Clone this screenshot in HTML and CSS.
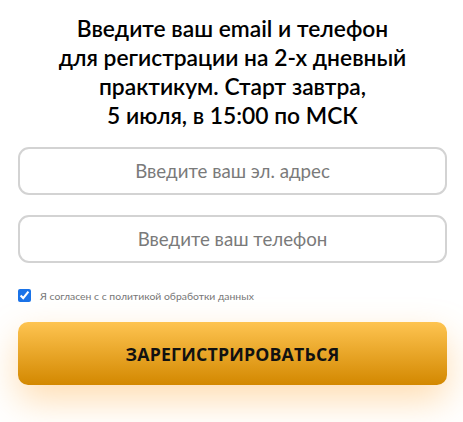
FILE: index.html
```html
<!DOCTYPE html>
<html lang="ru">
<head>
<meta charset="utf-8">
<link rel="stylesheet" href="styles.css">
</head>
<body>
<form class="form">
  <h2 class="title">Введите ваш email и телефон<br>для регистрации на 2-х дневный<br>практикум. Старт завтра,<br>5 июля, в 15:00 по МСК</h2>
  <input class="field" type="text" placeholder="Введите ваш эл. адрес">
  <input class="field" type="text" placeholder="Введите ваш телефон">
  <label class="agree"><input class="check" type="checkbox" checked><span>Я согласен с с политикой обработки данных</span></label>
  <button class="btn" type="button">ЗАРЕГИСТРИРОВАТЬСЯ</button>
</form>
</body>
</html>
```
FILE: styles.css
```css
html, body { margin: 0; padding: 0; background: #fff; }
body { font-family: "Lato", "Noto Sans", sans-serif; }
.form {
  width: 429px;
  margin-left: 18px;
  padding-bottom: 40px;
  display: flex;
  flex-direction: column;
}
.title {
  margin: 14px 0 0;
  font-weight: 600;
  font-size: 22.8px;
  line-height: 29px;
  text-align: center;
  color: #000;
}
.field {
  box-sizing: border-box;
  height: 48px;
  width: 100%;
  border: 2px solid #d3d3d3;
  border-radius: 11px;
  font-family: "Lato", sans-serif;
  font-size: 18.7px;
  text-align: center;
  color: #333;
  background: #fff;
  outline: none;
}
.field:first-of-type { margin-top: 17px; }
.field + .field { margin-top: 20px; }
.field::placeholder { color: #7a7a7a; }
.agree {
  display: flex;
  align-items: center;
  margin-top: 26px;
  font-size: 10.4px;
  color: #777;
}
.check {
  width: 13px;
  height: 13px;
  margin: 0 9px 0 0;
  accent-color: #1a73e8;
}
.btn {
  margin-top: 20px;
  height: 63px;
  border: none;
  border-radius: 10px;
  background: linear-gradient(to bottom, #fec451, #d38800);
  box-shadow: 0 15px 36px rgba(255, 170, 60, 0.4);
  font-family: "Open Sans", sans-serif;
  font-weight: 700;
  font-size: 17.7px;
  color: #111;
  letter-spacing: 0.2px;
}
```
